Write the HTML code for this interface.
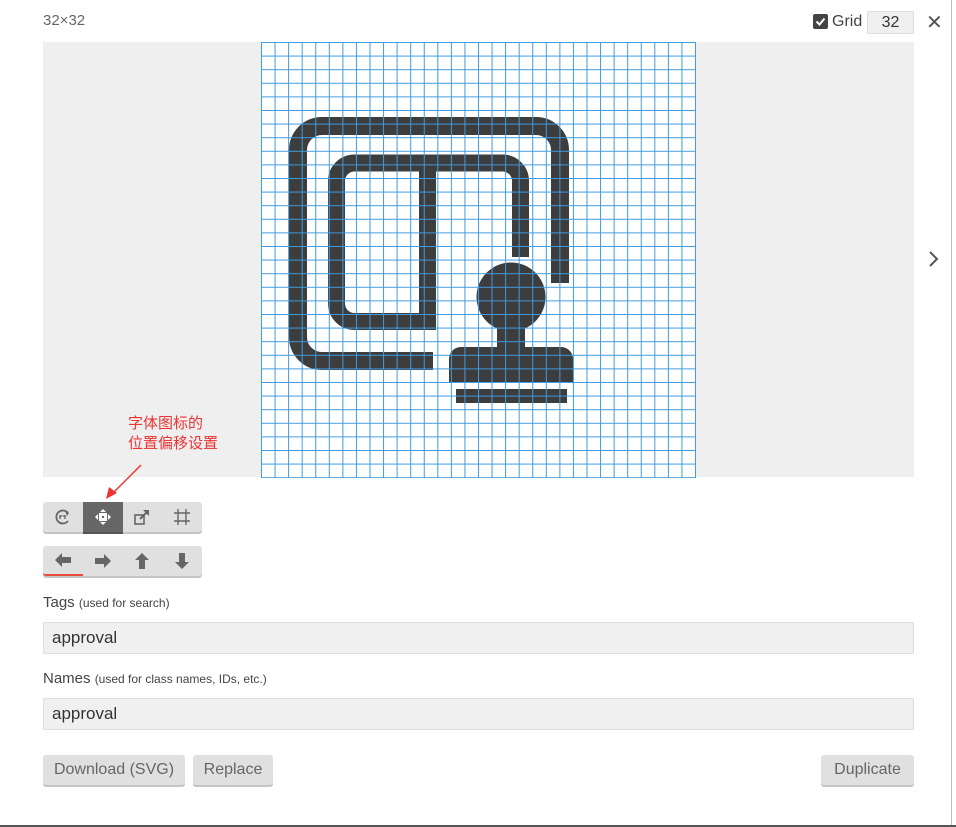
<!DOCTYPE html>
<html><head><meta charset="utf-8"><style>
*{box-sizing:border-box;margin:0;padding:0}
body{width:956px;height:827px;background:#fff;position:relative;overflow:hidden;font-family:"Liberation Sans","Noto Sans CJK SC",sans-serif;color:#444}
.abs{position:absolute}
.btn{position:absolute;background:#e0e0e0;border-radius:3px;box-shadow:0 2px 0 #c4c4c4;font-size:16px;color:#666;text-align:center;line-height:30px;height:30px}
.tb{position:absolute;left:43px;width:159px;height:30px;background:#e0e0e0;border-radius:3px;box-shadow:0 2px 0 #c4c4c4;display:flex}
.tb div{width:40px;height:30px;display:flex;align-items:center;justify-content:center}
.inp{position:absolute;left:43px;width:871px;height:32px;background:#f0f0f0;border:1px solid #ddd;border-radius:2px;font-size:17px;color:#333;padding-left:8px;line-height:30px}
.lbl{position:absolute;left:43px;font-size:15px;color:#444}
.lbl small{font-size:12px}
</style></head><body>
<div class="abs" style="right:4px;top:0;width:1px;height:827px;background:#bbb"></div>
<div class="abs" style="left:0;bottom:0;width:956px;height:2px;background:#555"></div>
<div class="abs" style="left:43px;top:12px;font-size:15px;color:#666">32×32</div>
<div class="abs" style="left:813px;top:14px;width:15px;height:15px;background:#444;border-radius:2px"><svg width="15" height="15" viewBox="0 0 15 15"><path d="M3.5 7.5l3 3 5-6" stroke="#fff" stroke-width="2" fill="none"/></svg></div>
<div class="abs" style="left:832px;top:13px;font-size:16px;color:#444">Grid</div>
<div class="abs" style="left:867px;top:11px;width:47px;height:23px;background:#f0f0f0;border:1px solid #ddd;border-radius:2px;font-size:16px;text-align:center;line-height:21px;color:#333">32</div>
<div class="abs" style="left:926px;top:10px;font-size:20px;color:#555">✕</div>
<div class="abs" style="left:43px;top:42px;width:871px;height:435px;background:#efefef"></div>
<svg class="abs" style="left:927px;top:250px" width="12" height="18" viewBox="0 0 12 18"><path d="M3 2l7 7-7 7" stroke="#555" stroke-width="2" fill="none"/></svg>
<svg class="abs" style="left:0;top:0" width="956" height="827">
<defs><pattern id="g" x="261" y="42" width="13.5625" height="13.6" patternUnits="userSpaceOnUse"><path d="M0.5 0V13.6M0 0.5H13.5625" stroke="#3f9be0" stroke-width="1" fill="none"/></pattern></defs>
<rect x="261" y="42" width="434" height="435" fill="#fff"/>
<g fill="#3d3d3d" stroke="#3d3d3d">
<path d="M560,283 V150 A24,24 0 0 0 536,126 H322 A24,24 0 0 0 298,150 V337 A24,24 0 0 0 322,361 H433" fill="none" stroke-width="18"/>
<path d="M520.5,257 V181 A18,18 0 0 0 502.5,163 H354.5 A18,18 0 0 0 336.5,181 V303.5 A18,18 0 0 0 354.5,321.5 H436" fill="none" stroke-width="17"/>
<rect x="419" y="163" width="17" height="167" stroke="none"/>
<circle cx="511" cy="297" r="34.5" stroke="none"/>
<rect x="497" y="320" width="28" height="30" stroke="none"/>
<path d="M449,382 V359 A12,12 0 0 1 461,347 H561 A12,12 0 0 1 573,359 V382 Z" stroke="none"/>
<rect x="456" y="389" width="111" height="14" stroke="none"/>
</g>
<rect x="261" y="42" width="435" height="436" fill="url(#g)"/>
<path d="M141,465 L112,494" stroke="#e33" stroke-width="1.5"/>
<path d="M106,499 L109,487 L117,493 Z" fill="#e33"/>
</svg>
<div class="abs" style="left:128px;top:414px;font-size:15px;color:#e33;line-height:20px">字体图标的<br>位置偏移设置</div>
<div class="tb" style="top:502px">
<div><svg width="18" height="18" viewBox="0 0 18 18"><path d="M14 5A6.5 6.5 0 1 0 14 13" stroke="#666" stroke-width="1.8" fill="none"/><path d="M11 3l4 2-2 3z" fill="#666"/><path d="M6 7v4M11 7v4M6 9l2-1.5M11 9l-2-1.5" stroke="#666" stroke-width="1.3"/></svg></div>
<div style="background:#666;box-shadow:0 2px 0 #555"><svg width="18" height="18" viewBox="0 0 18 18"><path d="M9 1l3 3H6zM9 17l3-3H6zM1 9l3-3v6zM17 9l-3-3v6z" fill="#fff"/><rect x="5" y="5" width="8" height="8" fill="#fff"/><rect x="8" y="8" width="2" height="2" fill="#666"/></svg></div>
<div><svg width="18" height="18" viewBox="0 0 18 18"><rect x="2" y="7" width="9" height="9" stroke="#666" stroke-width="1.6" fill="none"/><path d="M7 11l8-8" stroke="#666" stroke-width="2"/><path d="M10 2h6v6z" fill="#666"/></svg></div>
<div><svg width="18" height="18" viewBox="0 0 18 18"><path d="M5 1v16M13 1v16M1 5h16M1 13h16" stroke="#666" stroke-width="1.4"/></svg></div>
</div>
<div class="tb" style="top:546px">
<div style="border-bottom:2px solid #e74c3c;border-radius:0 0 0 3px"><svg width="18" height="16" viewBox="0 0 18 16"><path d="M1 8l7-7v4h9v6H8v4z" fill="#666"/></svg></div>
<div><svg width="18" height="16" viewBox="0 0 18 16"><path d="M17 8l-7-7v4H1v6h9v4z" fill="#666"/></svg></div>
<div><svg width="16" height="18" viewBox="0 0 16 18"><path d="M8 1l7 7h-4v9H5V8H1z" fill="#666"/></svg></div>
<div><svg width="16" height="18" viewBox="0 0 16 18"><path d="M8 17l7-7h-4V1H5v9H1z" fill="#666"/></svg></div>
</div>
<div class="lbl" style="top:594px">Tags <small>(used for search)</small></div>
<div class="inp" style="top:622px">approval</div>
<div class="lbl" style="top:670px">Names <small>(used for class names, IDs, etc.)</small></div>
<div class="inp" style="top:698px">approval</div>
<div class="btn" style="left:43px;top:755px;width:142px">Download (SVG)</div>
<div class="btn" style="left:193px;top:755px;width:80px">Replace</div>
<div class="btn" style="left:821px;top:755px;width:93px">Duplicate</div>
</body></html>
